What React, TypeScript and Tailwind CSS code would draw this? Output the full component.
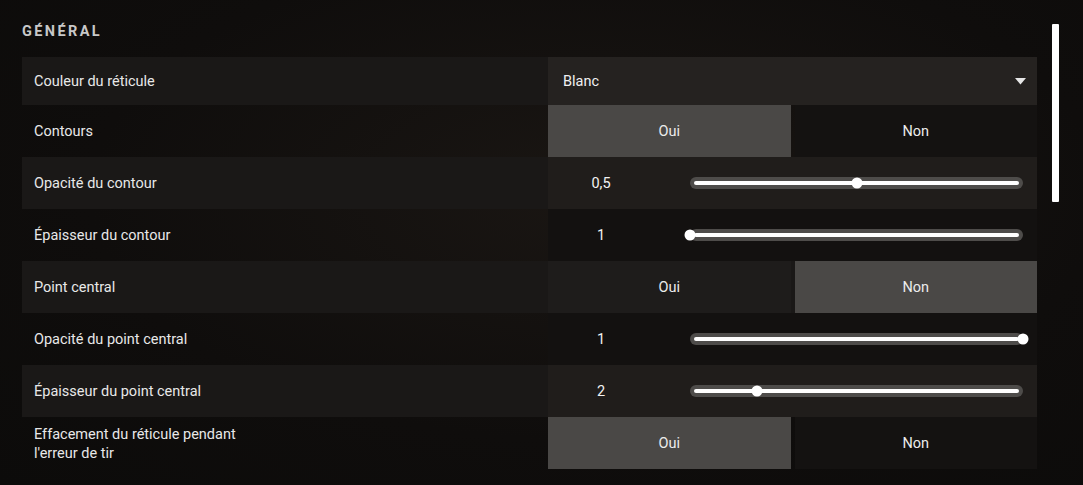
import React from "react";

type Row =
  | { kind: "select"; label: string; value: string }
  | { kind: "toggle"; label: string; on: boolean }
  | { kind: "slider"; label: string; value: string; frac: number };

const rows: Row[] = [
  { kind: "select", label: "Couleur du réticule", value: "Blanc" },
  { kind: "toggle", label: "Contours", on: true },
  { kind: "slider", label: "Opacité du contour", value: "0,5", frac: 0.5 },
  { kind: "slider", label: "Épaisseur du contour", value: "1", frac: 0 },
  { kind: "toggle", label: "Point central", on: false },
  { kind: "slider", label: "Opacité du point central", value: "1", frac: 1 },
  { kind: "slider", label: "Épaisseur du point central", value: "2", frac: 0.2 },
  { kind: "toggle", label: "Effacement du réticule pendant\nl'erreur de tir", on: true },
];

function Slider({ value, frac, light }: { value: string; frac: number; light: boolean }) {
  return (
    <div className={`flex h-full items-center ${light ? "bg-[#201d1b]" : "bg-[#131110]"}`}>
      <div className="w-[106px] pt-[2px] text-center text-[14.5px] text-[#f2f2f2]">{value}</div>
      <div className="relative ml-[36px] h-[12px] w-[333px] rounded-full bg-[#4e4c4a] px-[4px] py-[4px]">
        <div className="h-[4px] w-full rounded-full bg-white" />
        <div
          className="absolute top-1/2 h-[11px] w-[11px] -translate-x-1/2 -translate-y-1/2 rounded-full bg-white"
          style={{ left: `${frac * 333}px` }}
        />
      </div>
    </div>
  );
}

function Toggle({ on, light }: { on: boolean; light: boolean }) {
  const off = light ? "bg-[#1e1c1b]" : "bg-[#141211]";
  const sel = "bg-[#4a4846]";
  return (
    <div className="grid h-full grid-cols-2 gap-1">
      <div className={`flex items-center justify-center pt-[2px] text-[14.5px] text-[#ececec] ${on ? sel : off}`}>Oui</div>
      <div className={`flex items-center justify-center pt-[2px] text-[14.5px] text-[#ececec] ${on ? off : sel}`}>Non</div>
    </div>
  );
}

function Select({ value }: { value: string }) {
  return (
    <div className="flex h-full items-center justify-between bg-[#252220] pl-[15px] pr-[11px] text-[14.5px] text-[#f0f0f0]">
      <span className="pt-[1px]">{value}</span>
      <svg width="11" height="7" viewBox="0 0 11 7">
        <path d="M0 0 L11 0 L5.5 6.5 Z" fill="#e6e6e6" />
      </svg>
    </div>
  );
}

export default function App() {
  return (
    <div
      className="flex h-[485px] w-full overflow-hidden bg-[radial-gradient(ellipse_at_55%_40%,#1a1613_0%,#0f0d0c_60%,#0c0b0a_100%)]"
      style={{ fontFamily: "Roboto, 'Noto Sans', sans-serif" }}
    >
      <div className="w-[1037px] shrink-0 pl-[22px] pt-[22px]">
        <h2 className="mb-[15px] h-[20px] text-[14.5px] font-bold leading-[20px] tracking-[2.4px] text-[#c8c8c8]">
          GÉNÉRAL
        </h2>
        <div className="flex flex-col">
          {rows.map((r, i) => {
            const light = i % 2 === 0;
            return (
              <div
                key={i}
                className={`flex ${i === 0 ? "h-[48px]" : "h-[52px]"} ${light ? "bg-[#1a1817]" : ""}`}
              >
                <div className="flex w-[526px] shrink-0 items-center whitespace-pre-line pl-[12px] pt-[1px] text-[14.5px] leading-[19px] text-[#e8e8e8]">
                  {r.label}
                </div>
                <div className="w-[489px] shrink-0">
                  {r.kind === "select" && <Select value={r.value} />}
                  {r.kind === "toggle" && <Toggle on={r.on} light={light} />}
                  {r.kind === "slider" && <Slider value={r.value} frac={r.frac} light={light} />}
                </div>
              </div>
            );
          })}
        </div>
      </div>
      <div className="ml-[15px] pt-[24px]">
        <div className="h-[178px] w-[7px] rounded-[1px] bg-white" />
      </div>
    </div>
  );
}
